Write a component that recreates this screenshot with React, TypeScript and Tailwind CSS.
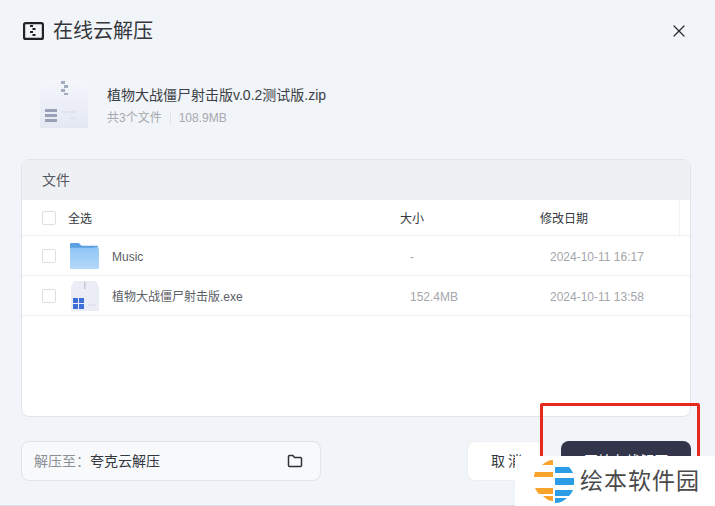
import React from 'react';
import { X } from 'lucide-react';

const font = { fontFamily: '"Liberation Sans", "Noto Sans CJK SC", sans-serif' };

const ZipIcon = () => (
  <svg width="21" height="18" viewBox="0 0 21 18" fill="none" className="shrink-0">
    <rect x="1.1" y="1.1" width="18.800" height="15.800" rx="1.5" stroke="#1f2329" strokeWidth="2.2" />
    <path d="M7 3h3v2H7zM9.500 6h3v2h-3zM7 9h3v2H7zM9.500 12h3v2h-3z" fill="#1f2329" />
  </svg>
);

const ArchiveIcon = () => (
  <svg width="48" height="48" viewBox="0 0 48 48" className="shrink-0">
    <defs>
      <linearGradient id="boxFill" x1="0" y1="0" x2="0" y2="1">
        <stop offset="0" stopColor="#f4f6fb" />
        <stop offset="1" stopColor="#e4e8f3" />
      </linearGradient>
    </defs>
    <path d="M5 0h38l5 8v39a1 1 0 0 1-1 1H1a1 1 0 0 1-1-1V8z" fill="url(#boxFill)" />
    <path d="M21 1h4v3h-4zM24 5h4v3h-4zM21 9h4v3h-4zM24 13h4v2h-4z" fill="#a3abc0" />
    <path d="M5 29h12v3H5zM5 34h12v3H5zM5 39h12v3H5z" fill="#98a1b5" />
    <path d="M22 31h14v2H22zM30 37h6v2h-6z" fill="#e0e3ed" />
  </svg>
);

const FolderIcon = () => (
  <svg width="29" height="27" viewBox="0 0 30 28" className="shrink-0">
    <defs>
      <linearGradient id="folderFill" x1="0" y1="0" x2="0" y2="1">
        <stop offset="0" stopColor="#8fc4f5" />
        <stop offset="1" stopColor="#b4d9f9" />
      </linearGradient>
    </defs>
    <path d="M0 2a1 1 0 0 1 1-1h8l3 3h16a1 1 0 0 1 1 1v3H0z" fill="#5a9fe2" />
    <path d="M0 6h24l5-1 1 3v19a1 1 0 0 1-1 1H1a1 1 0 0 1-1-1z" fill="url(#folderFill)" />
  </svg>
);

const ExeIcon = () => (
  <svg width="30" height="30" viewBox="0 0 30 30" className="shrink-0">
    <path d="M4 0h22l3 6v23a1 1 0 0 1-1 1H2a1 1 0 0 1-1-1V6z" fill="#eaedf6" />
    <path d="M14 1h1.500v7H14z" fill="#c3c9d8" />
    <path d="M3 17h5v5H3zM9 17h5v5H9zM3 23h5v5H3zM9 23h5v5H9z" fill="#3d6fd8" />
    <path d="M18 23h8v2h-8z" fill="#dfe3ee" />
  </svg>
);

const Checkbox = () => <span className="block w-[14px] h-[14px] shrink-0 rounded-[2px] border border-[#dcdfe4] bg-white" />;

const FileRow = ({ icon, name, size, date }: { icon: React.ReactNode; name: string; size: string; date: string }) => (
  <div className="flex items-center h-10 border-b border-[#eceef1] text-xs">
    <div className="w-[47px] pl-5 pt-[1px]"><Checkbox /></div>
    <div className="w-[43px] pl-[1px] flex">{icon}</div>
    <div className="w-[298px] pt-[2px] text-[#5c6066]">{name}</div>
    <div className="w-[140px] pt-[2px] text-[#a3a6ab]">{size}</div>
    <div className="pt-[2px] text-[#a3a6ab]">{date}</div>
  </div>
);

export default function App() {
  return (
    <div style={font} className="relative w-[715px] h-[506px] overflow-hidden bg-[#f1f4f8] text-[#1f2329]">
      {/* Dialog */}
      <div className="flex flex-col h-[506px] border-b border-[#d9dce0] pl-[21px] pr-[24px]">
        <div className="flex items-center h-[62px] pl-[2px]">
          <ZipIcon />
          <h1 className="ml-[9px] text-[20px] font-normal text-[#33363b]">在线云解压</h1>
          <X className="ml-auto mr-[2px] w-[20px] h-[20px] text-[#2a2d33]" strokeWidth={1.5} />
        </div>

        <div className="flex items-start h-[97px] pt-[18px] pl-[19px]">
          <ArchiveIcon />
          <div className="ml-[19px] pt-[5px]">
            <div className="text-sm leading-5 text-[#3b3e44]">植物大战僵尸射击版v.0.2测试版.zip</div>
            <div className="flex items-center mt-[4px] text-xs leading-[18px] text-[#a6a9ae]">
              <span>共3个文件</span>
              <span className="mx-2 h-3 w-px bg-[#dfe1e5]" />
              <span>108.9MB</span>
            </div>
          </div>
        </div>

        {/* File table */}
        <div className="h-[258px] rounded-lg border border-[#e0e3e7] bg-white overflow-hidden">
          <div className="flex items-center h-10 pl-5 bg-[#eef0f3] text-sm text-[#55585e]">文件</div>
          <div className="flex items-center h-9 border-b border-[#eceef1] text-xs text-[#33363b]">
            <div className="w-[46px] pl-5 pt-[1px]"><Checkbox /></div>
            <div className="w-[332px] pt-[2px]">全选</div>
            <div className="w-[140px] pt-[2px]">大小</div>
            <div className="w-[139px] pt-[2px]">修改日期</div>
            <span className="h-full w-px bg-[#f1f2f4]" />
          </div>
          <FileRow icon={<FolderIcon />} name="Music" size="-" date="2024-10-11 16:17" />
          <FileRow icon={<ExeIcon />} name="植物大战僵尸射击版.exe" size="152.4MB" date="2024-10-11 13:58" />
        </div>

        {/* Footer */}
        <div className="flex items-start mt-6">
          <div className="flex items-center w-[300px] h-10 px-3 rounded-lg border border-[#e0e3e7] bg-[#f7f9fb] text-sm">
            <span className="text-[#8c9096]">解压至：</span>
            <span className="text-[#33363b]">夸克云解压</span>
            <svg width="16" height="14" viewBox="0 0 16 14" fill="none" className="ml-auto mr-[5px]">
              <path d="M1.500 2.500a1 1 0 0 1 1-1h3.400l1.600 2h6a1 1 0 0 1 1 1v7a1 1 0 0 1-1 1h-11a1 1 0 0 1-1-1z" stroke="#2f3238" strokeWidth="1.500" />
            </svg>
          </div>
          <button className="ml-auto w-[76px] h-10 pl-[6px] rounded-lg bg-white border border-[#eceef1] text-sm text-[#33363b] tracking-[3px]">取消</button>
          <button className="ml-[18px] w-[130px] h-10 rounded-lg bg-[#33364a] text-sm text-white">开始在线解压</button>
        </div>
      </div>

      {/* Red annotation */}
      <div className="absolute left-[540px] top-[403px] w-[160px] h-[120px] rounded-[2px] border-[3px] border-[#e8281e]" />

      {/* Watermark */}
      <div className="absolute left-[515px] top-[456px] w-[200px] h-[50px] flex items-center bg-white">
        <svg width="42" height="44" viewBox="0 0 42 44" className="ml-[18px] shrink-0">
          <path d="M9 6C12 3 16 1 20 1v5z" fill="#f9a32b" />
          <path d="M1 18c0-2 .5-3.500 1-5h18v5z" fill="#f9a32b" />
          <path d="M2 29h18v6H6c-2-2-3-4-4-6z" fill="#f9a32b" />
          <path d="M10 37h10v5c-4 0-7-2-10-5z" fill="#f9a32b" />
          <path d="M22 8h14c2 2 3 4 4 6H22z" fill="#2b9ce6" />
          <path d="M22 19h19v7H22z" fill="#2b9ce6" />
          <path d="M22 31h18c-1 2-2 4-4 6H22z" fill="#2b9ce6" />
          <path d="M22 39h12c-3 3-7 5-12 5z" fill="#2b9ce6" />
        </svg>
        <span className="ml-[5px] text-[23px] leading-none tracking-[1px] text-[#4a4a4a] whitespace-nowrap">绘本软件园</span>
      </div>
    </div>
  );
}
